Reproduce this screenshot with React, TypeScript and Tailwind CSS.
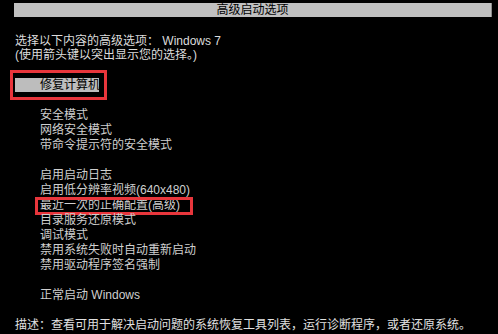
const font = { fontFamily: '"Liberation Sans", "Noto Sans CJK SC", sans-serif' }

const groupA = ['安全模式', '网络安全模式', '带命令提示符的安全模式']
const groupB = [
  '启用启动日志',
  '启用低分辨率视频(640x480)',
  '最近一次的正确配置(高级)',
  '目录服务还原模式',
  '调试模式',
  '禁用系统失败时自动重新启动',
  '禁用驱动程序签名强制',
]

export default function App() {
  return (
    <div
      className="w-[498px] h-[334px] bg-black text-[#cfcfcf] text-[12px] overflow-hidden pt-[3px] whitespace-nowrap"
      style={font}
    >
      <div className="ml-[14px] w-[478px] h-[14px] bg-[#c0c0c0] text-black leading-[14px] text-center border-r border-[#8a8a8a]">
        高级启动选项
      </div>

      <div className="mt-[17px] pl-[15px] leading-[14px] text-[#dcdcdc]">
        <div>选择以下内容的高级选项： Windows 7</div>
        <div>(使用箭头键以突出显示您的选择。)</div>
      </div>

      <div className="relative mt-[16px] ml-[15px] w-[84px] h-[14px] bg-[#bdbdbd] text-black leading-[14px] pl-[25px]">
        修复计算机
        <div className="absolute top-[-8px] left-[-5px] w-[97px] h-[30px] border-[3px] border-[#e8363c]" />
      </div>

      <div className="mt-[16px] pl-[40px] leading-[15px]">
        {groupA.map((t) => (
          <div key={t}>{t}</div>
        ))}
        <div className="h-[15px]" />
        {groupB.map((t) => (
          <div key={t} className="relative">
            {t}
            {t.startsWith('最近') && (
              <div className="absolute top-[-1px] left-[-5px] w-[158px] h-[18px] border-[3px] border-[#e8363c]" />
            )}
          </div>
        ))}
        <div className="h-[15px]" />
        <div>正常启动 Windows</div>
      </div>

      <div className="mt-[15px] pl-[15px] leading-[15px] text-[#e0e0e0]">
        描述：查看可用于解决启动问题的系统恢复工具列表，运行诊断程序，或者还原系统。
      </div>
    </div>
  )
}
